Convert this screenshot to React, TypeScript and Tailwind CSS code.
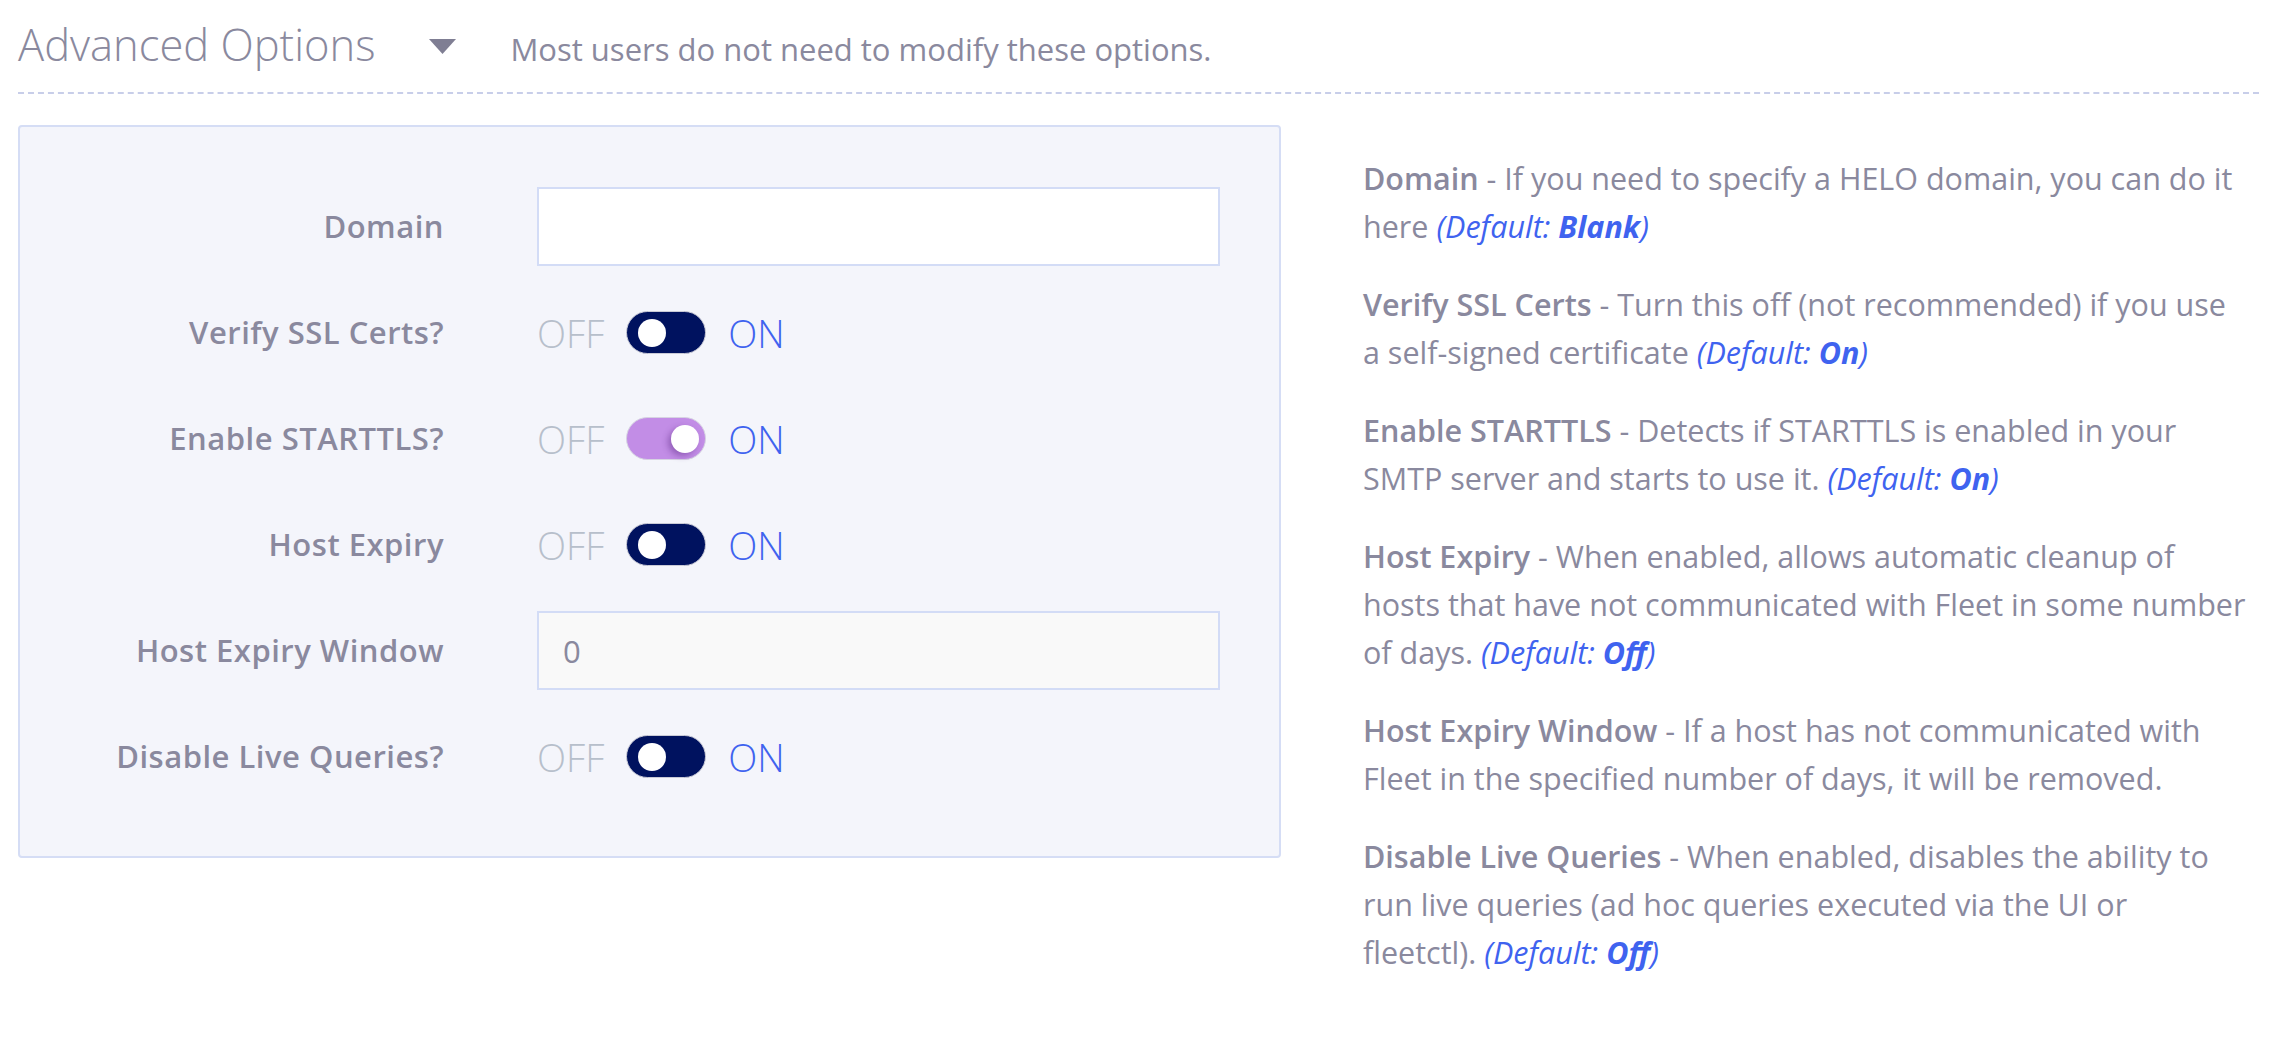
import React, { FC } from 'react';

type Help = {
  title: string;
  text: string;
  defaultValue?: string;
};

// line breaks follow the layout of the original page
const helpList: Help[] = [
  { title: 'Domain', text: 'If you need to specify a HELO domain, you can do it\nhere', defaultValue: 'Blank' },
  { title: 'Verify SSL Certs', text: 'Turn this off (not recommended) if you use\na self-signed certificate', defaultValue: 'On' },
  { title: 'Enable STARTTLS', text: 'Detects if STARTTLS is enabled in your\nSMTP server and starts to use it.', defaultValue: 'On' },
  { title: 'Host Expiry', text: 'When enabled, allows automatic cleanup of\nhosts that have not communicated with Fleet in some number\nof days.', defaultValue: 'Off' },
  { title: 'Host Expiry Window', text: 'If a host has not communicated with\nFleet in the specified number of days, it will be removed.' },
  { title: 'Disable Live Queries', text: 'When enabled, disables the ability to\nrun live queries (ad hoc queries executed via the UI or\nfleetctl).', defaultValue: 'Off' },
];

const Toggle: FC<{ purple?: boolean }> = ({ purple }) => {
  return (
    <div className="flex items-center">
      <span className="text-[38px] font-light text-[#b7bfcb] leading-none">OFF</span>
      <button
        className={
          purple
            ? 'ml-[22px] w-[80px] h-[43px] shrink-0 rounded-full border border-[#d6d3e2] bg-[#c28de6] flex items-center justify-end pr-[6px]'
            : 'ml-[22px] w-[80px] h-[43px] shrink-0 rounded-full border border-[#c9cad6] bg-[#00125f] flex items-center pl-[11px]'
        }
      >
        <span
          className={
            purple
              ? 'w-[28px] h-[28px] rounded-full bg-white shadow-[-3px_3px_6px_rgba(90,40,130,0.45)]'
              : 'w-[28px] h-[28px] rounded-full bg-white'
          }
        />
      </button>
      <span className="ml-[22px] text-[38px] font-light text-[#3f63ef] leading-none">ON</span>
    </div>
  );
};

const Row: FC<{ label: string; children: React.ReactNode }> = ({ label, children }) => (
  <>
    <div className="h-[79px] flex items-center justify-end text-[31px] tracking-[0.5px] font-semibold text-[#8a899e] whitespace-nowrap">
      {label}
    </div>
    <div className="h-[79px] flex items-center">{children}</div>
  </>
);

export default function App() {
  return (
    <div className="min-h-screen bg-white pl-[18px] pr-[29px] pt-[16px]" style={{ fontFamily: '"Open Sans", sans-serif' }}>
      <div className="flex items-baseline">
        <h2 className="text-[43.5px] font-light leading-[57px] text-[#8a899e]">Advanced Options</h2>
        <svg className="ml-[54px] self-center translate-y-[2px]" width="27" height="15" viewBox="0 0 27 15">
          <polygon points="0,0 27,0 13.5,15" fill="#7f7e93" />
        </svg>
        <p className="ml-[54px] text-[31px] font-normal text-[#8a899e]">Most users do not need to modify these options.</p>
      </div>
      <div className="mt-[19px] border-t-2 border-dashed border-[#c8cee9]" />

      <div className="mt-[31px] flex items-start gap-[82px]">
        <div className="w-[1263px] shrink-0 rounded-[4px] border-2 border-[#d5ddf5] bg-[#f4f5fb] px-[60px] py-[60px]">
          <div className="grid grid-cols-[364px_683px] gap-x-[93px] gap-y-[27px]">
            <Row label="Domain">
              <input
                className="w-full h-[79px] border-2 border-[#d3dcf6] bg-white px-[24px] text-[31px] text-[#8a899e] outline-none"
                type="text"
                defaultValue=""
              />
            </Row>
            <Row label="Verify SSL Certs?">
              <Toggle />
            </Row>
            <Row label="Enable STARTTLS?">
              <Toggle purple />
            </Row>
            <Row label="Host Expiry">
              <Toggle />
            </Row>
            <Row label="Host Expiry Window">
              <input
                className="w-full h-[79px] border-2 border-[#d3dcf6] bg-[#f9f9f9] px-[24px] text-[31px] text-[#8a899e] outline-none"
                type="text"
                defaultValue="0"
              />
            </Row>
            <Row label="Disable Live Queries?">
              <Toggle />
            </Row>
          </div>
        </div>

        <div className="flex-1 mt-[29px] text-[30.5px] leading-[48px] text-[#8a899e]">
          {helpList.map((item) => (
            <p key={item.title} className="mb-[30px] whitespace-pre-line">
              <span className="font-semibold">{item.title}</span> - {item.text}
              {item.defaultValue && (
                <>
                  {' '}
                  <em className="text-[#3f63ef]">
                    (Default: <strong className="font-bold">{item.defaultValue}</strong>)
                  </em>
                </>
              )}
            </p>
          ))}
        </div>
      </div>
    </div>
  );
}
